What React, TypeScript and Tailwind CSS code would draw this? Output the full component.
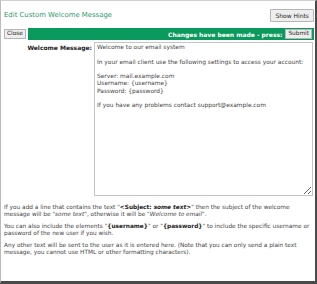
export default function App() {
  return (
    <div className="w-[317px] h-[284px] bg-white border-l border-t border-l-[#bbbbbb] border-t-[#d0d0d0] border-r-2 border-b-[3px] border-r-[#4a4a4a] border-b-[#4a4a4a] overflow-hidden text-[#333333] [font-family:'DejaVu_Sans',sans-serif]">
      {/* header */}
      <div className="flex items-center justify-between pl-[3px] pr-[1px] pt-[7px] h-[22px]">
        <h1 className="text-[6.9px] text-[#2b9a6a] font-normal">Edit Custom Welcome Message</h1>
        <button className="h-[13px] px-[4px] text-[6px] text-[#222] bg-[#eeeeee] border border-[#b5b5b5] rounded-[1px] leading-none">
          Show Hints
        </button>
      </div>

      {/* action bar */}
      <div className="flex items-center mt-[5px] h-[12px] pr-[1px]">
        <div className="pl-[3px] pr-[2px] flex items-center">
          <button className="h-[10px] px-[2px] text-[5.8px] text-[#222] bg-[#eeeeee] border border-[#b5b5b5] leading-none">
            Close
          </button>
        </div>
        <div className="flex-1 h-full bg-[#0b9a5d] flex items-center justify-end gap-[3px] pr-[2px]">
          <span className="text-[6px] font-bold text-white">Changes have been made - press:</span>
          <button className="h-[10px] px-[2px] text-[5.8px] text-[#222] bg-[#eeeeee] border border-[#b5b5b5] leading-none">
            Submit
          </button>
        </div>
      </div>

      {/* form */}
      <div className="flex mt-[2px] pr-[2px]">
        <label className="w-[93px] pr-[2px] text-right text-[6px] font-bold text-[#222] pt-[1px]">
          Welcome Message:
        </label>
        <textarea
          className="flex-1 h-[154px] border border-[#c4c4c4] px-[2px] py-[1px] text-[5.9px] leading-[7.3px] text-[#444] resize-y outline-none"
          defaultValue={
            'Welcome to our email system\n\nIn your email client use the following settings to access your account:\n\nServer: mail.example.com\nUsername: {username}\nPassword: {password}\n\nIf you have any problems contact support@example.com'
          }
        />
      </div>

      {/* notes */}
      <div className="px-[3px] mt-[8px] text-[5.8px] leading-[7.3px] text-[#444] space-y-[4.4px]">
        <p>
          If you add a line that contains the text "<b className="text-[#222]">&lt;Subject: <i>some text</i>&gt;</b>" then the subject of the welcome message will be "<i>some text</i>", otherwise it will be "<i>Welcome to email</i>".
        </p>
        <p>
          You can also include the elements "<b className="text-[#222]">{'{username}'}</b>" or "<b className="text-[#222]">{'{password}'}</b>" to include the specific username or password of the new user if you wish.
        </p>
        <p>
          Any other text will be sent to the user as it is entered here. (Note that you can only send a plain text message, you cannot use HTML or other formatting characters).
        </p>
      </div>
    </div>
  )
}
